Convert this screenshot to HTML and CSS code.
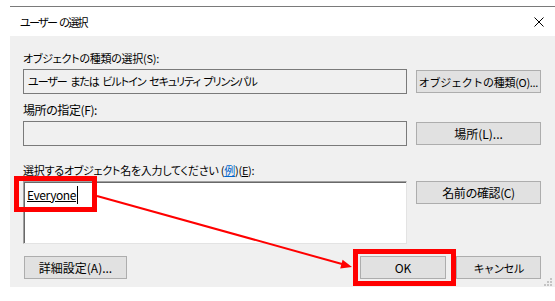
FILE: index.html
```html
<!DOCTYPE html>
<html lang="ja">
<head>
    <meta charset="UTF-8">
    <title>ユーザー の選択</title>
    <link rel="stylesheet" href="styles.css">
</head>
<body>
    <div class="top-rule"></div>
    <div class="dialog">
        <div class="title-bar">
            <span class="title">ユーザー の選択</span>
            <svg class="close" width="10" height="10" viewBox="0 0 10 10">
                <path d="M0.5 0.5L9.5 9.5M9.5 0.5L0.5 9.5" stroke="#000" stroke-width="1" fill="none"/>
            </svg>
        </div>

        <div class="dialog-body">
            <div class="label kana">オブジェクトの種類の選択(S):</div>
            <div class="row">
                <div class="field readonly">ユーザー または ビルトイン セキュリティ プリンシパル</div>
                <button class="btn kana">オブジェクトの種類(O)...</button>
            </div>

            <div class="label gap-8 kanji">場所の指定(F):</div>
            <div class="row">
                <div class="field readonly"></div>
                <button class="btn">場所(L)...</button>
            </div>

            <div class="label gap-16 kana">選択するオブジェクト名を入力してください (<a class="link">例</a>)(<u>E</u>):</div>
            <div class="row top">
                <div class="field names"><u>Everyone</u><span class="caret"></span></div>
                <button class="btn kanji">名前の確認(C)</button>
            </div>

            <div class="footer-row">
                <button class="btn advanced">詳細設定(A)...</button>
                <div class="actions">
                    <button class="btn ok">OK</button>
                    <button class="btn cancel">キャンセル</button>
                </div>
            </div>

            <svg class="grip" width="8" height="8" viewBox="0 0 8 8">
                <rect x="6" y="0" width="2" height="2" fill="#c4c4c4"/>
                <rect x="3" y="3" width="2" height="2" fill="#c4c4c4"/>
                <rect x="6" y="3" width="2" height="2" fill="#c4c4c4"/>
                <rect x="0" y="6" width="2" height="2" fill="#c4c4c4"/>
                <rect x="3" y="6" width="2" height="2" fill="#c4c4c4"/>
                <rect x="6" y="6" width="2" height="2" fill="#c4c4c4"/>
            </svg>
        </div>
    </div>

    <!-- annotation marks drawn over the dialog -->
    <div class="mark mark-name"></div>
    <div class="mark mark-ok"></div>
    <svg class="arrow" width="555" height="301" viewBox="0 0 555 301">
        <line x1="97" y1="196" x2="342" y2="264" stroke="#ff0000" stroke-width="2"/>
        <polygon points="352,267 342.6,259.7 340.2,268.4" fill="#ff0000"/>
    </svg>
</body>
</html>
```

FILE: styles.css
```css
body {
    margin: 0;
    padding: 0;
    width: 555px;
    height: 301px;
    overflow: hidden;
    background-color: #fff;
    font-family: "Noto Sans CJK JP", "Noto Sans", sans-serif;
    font-size: 12px;
    color: #000;
    font-feature-settings: "palt";
    position: relative;
}

.top-rule {
    margin: 6px 0 0 10px;
    height: 1px;
    background-color: #7a7a7a;
}

.dialog {
    margin-left: 10px;
    width: 545px;
}

.title-bar {
    height: 29px;
    display: flex;
    align-items: center;
    justify-content: space-between;
    padding: 0 11px 0 10px;
    background-color: #fff;
}

/* the Windows UI font has much narrower kana than Noto */
.title {
    font-size: 11px;
    letter-spacing: -1.6px;
    word-spacing: 2px;
}

.kana {
    font-size: 11px;
    letter-spacing: -0.25px;
}

.kanji {
    letter-spacing: -0.4px;
}

.dialog-body {
    position: relative;
    background-color: #f0f0f0;
    padding: 14px 0 8px 13px;
}

.label {
    height: 16px;
    line-height: 16px;
    margin-bottom: 3px;
    white-space: nowrap;
}

.label.gap-8 {
    margin-top: 8px;
}

.label.gap-16 {
    margin-top: 16px;
}

.link {
    color: #0066cc;
    text-decoration: underline;
}

.row {
    display: flex;
    align-items: center;
    gap: 9px;
}

.row.top {
    align-items: flex-start;
}

.field {
    width: 384px;
    height: 25px;
    box-sizing: border-box;
    padding: 0 4px;
    line-height: 23px;
    white-space: nowrap;
}

.field.readonly {
    background-color: #f0f0f0;
    border: 1px solid #7a7a7a;
    font-size: 11px;
    letter-spacing: -1px;
    word-spacing: 2px;
}

.field.names {
    height: 63px;
    background-color: #fff;
    border: 1px solid;
    border-color: #a0a0a0 #e3e3e3 #e3e3e3 #a0a0a0;
    box-shadow: inset 1px 1px 0 #696969;
    padding: 4px 3px;
    line-height: 18px;
    letter-spacing: -0.4px;
}

.caret {
    display: inline-block;
    width: 1px;
    height: 18px;
    margin-left: 1px;
    background-color: #000;
    vertical-align: top;
}

.btn {
    width: 125px;
    height: 23px;
    box-sizing: border-box;
    padding: 0;
    background-color: #e1e1e1;
    border: 1px solid #adadad;
    font-family: inherit;
    font-size: 12px;
    color: #000;
    white-space: nowrap;
}

.btn.kana {
    font-size: 11px;
    letter-spacing: -0.3px;
}

.btn.kanji {
    letter-spacing: -0.4px;
}

.footer-row {
    display: flex;
    justify-content: space-between;
    margin-top: 12px;
    width: 518px;
}

.btn.advanced {
    width: 103px;
    margin-left: 1px;
}

.actions {
    display: flex;
    gap: 10px;
}

.btn.ok {
    width: 86px;
}

.btn.cancel {
    width: 85px;
    font-size: 11px;
    letter-spacing: -1px;
}

.grip {
    position: absolute;
    right: 3px;
    bottom: 1px;
}

.mark {
    position: absolute;
    border: 5px solid #ff0000;
    box-sizing: border-box;
}

.mark-name {
    left: 14px;
    top: 176px;
    width: 83px;
    height: 36px;
}

.mark-ok {
    left: 353px;
    top: 249px;
    width: 103px;
    height: 37px;
}

.arrow {
    position: absolute;
    left: 0;
    top: 0;
}
```
